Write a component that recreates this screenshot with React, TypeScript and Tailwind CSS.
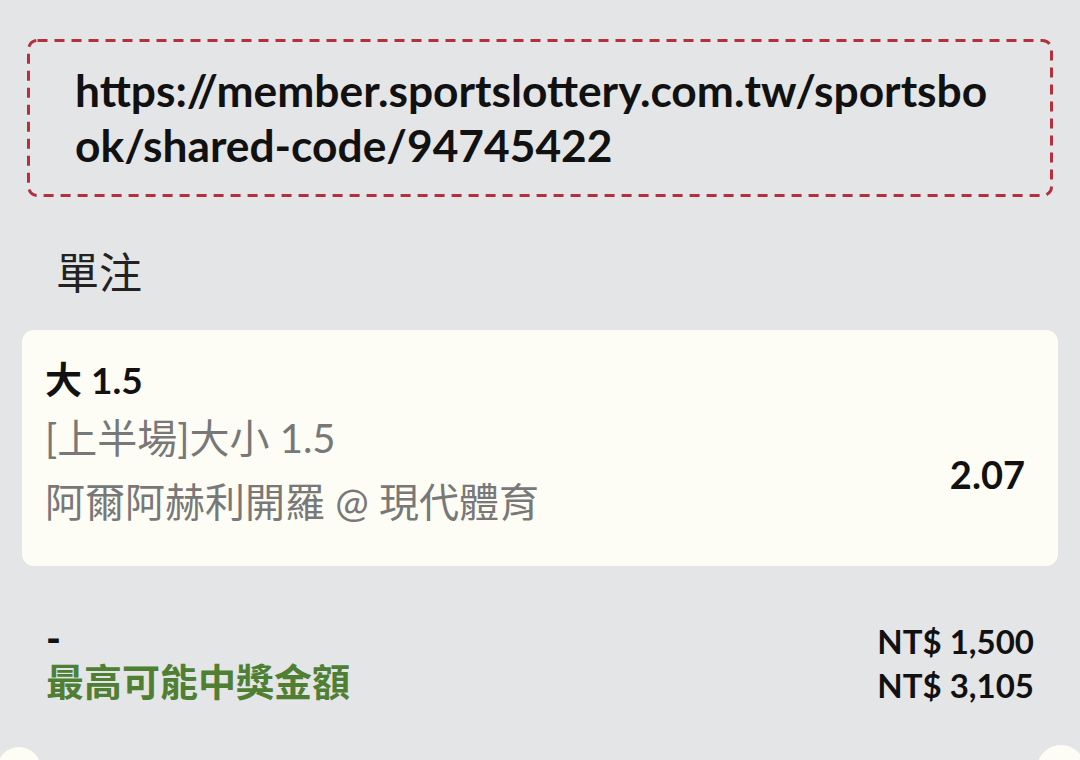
import React from "react";

export default function App() {
  const font = { fontFamily: "Lato, 'Noto Sans CJK TC', sans-serif" };
  return (
    <div
      className="relative w-[1080px] h-[760px] overflow-hidden bg-[#e4e5e7] text-[#111]"
      style={font}
    >
      <div className="px-[27px] pt-[39px]">
        <div className="relative h-[158px] pl-[48px] pr-[47px] pt-[23px]">
          <svg
            className="absolute inset-0 pointer-events-none"
            width="1026"
            height="158"
            viewBox="0 0 1026 158"
          >
            <rect
              x="1.5"
              y="1.5"
              width="1023"
              height="155"
              rx="9"
              fill="none"
              stroke="#b3303c"
              strokeWidth="3"
              strokeDasharray="10 7"
            />
          </svg>
          <p className="relative text-[44.3px] font-bold leading-[55px] break-all text-[#111]">
            https://member.sportslottery.com.tw/sportsbook/shared-code/94745422
          </p>
        </div>
      </div>

      <div className="pl-[56px] pt-[49px] h-[133px] text-[43px] leading-[54px] text-[#222]">
        單注
      </div>

      <div className="mx-[22px] h-[236px] rounded-[12px] bg-[#fdfdf5] pl-[23px] pr-[33px] pt-[28px] flex justify-between">
        <div className="flex flex-col">
          <div className="text-[37px] font-bold leading-[44px] text-[#111]">大 1.5</div>
          <div className="mt-[12px] text-[40px] leading-[48px] text-[#787878]">[上半場]大小 1.5</div>
          <div className="mt-[16px] text-[40px] leading-[48px] text-[#787878]">阿爾阿赫利開羅 @ 現代體育</div>
        </div>
        <div className="self-center pt-[24px] text-[38px] font-bold text-[#111]">2.07</div>
      </div>

      <div className="mt-[52px] pl-[46px] pr-[46px] flex justify-between">
        <div className="flex flex-col">
          <div className="h-[40px] text-[40px] font-black leading-[40px] text-[#111]">-</div>
          <div className="text-[38px] font-bold leading-[46px] text-[#4f7f33]">最高可能中獎金額</div>
        </div>
        <div className="flex flex-col items-end pt-[1px]">
          <div className="text-[33px] font-bold leading-[44px] text-[#111]">NT$ 1,500</div>
          <div className="text-[33px] font-bold leading-[44px] text-[#111]">NT$ 3,105</div>
        </div>
      </div>

      <div className="absolute left-[-3px] top-[747px] h-[44px] w-[44px] rounded-full bg-[#fdfdf5]" />
      <div className="absolute left-[1037px] top-[745px] h-[48px] w-[48px] rounded-full bg-[#fdfdf5]" />
    </div>
  );
}
